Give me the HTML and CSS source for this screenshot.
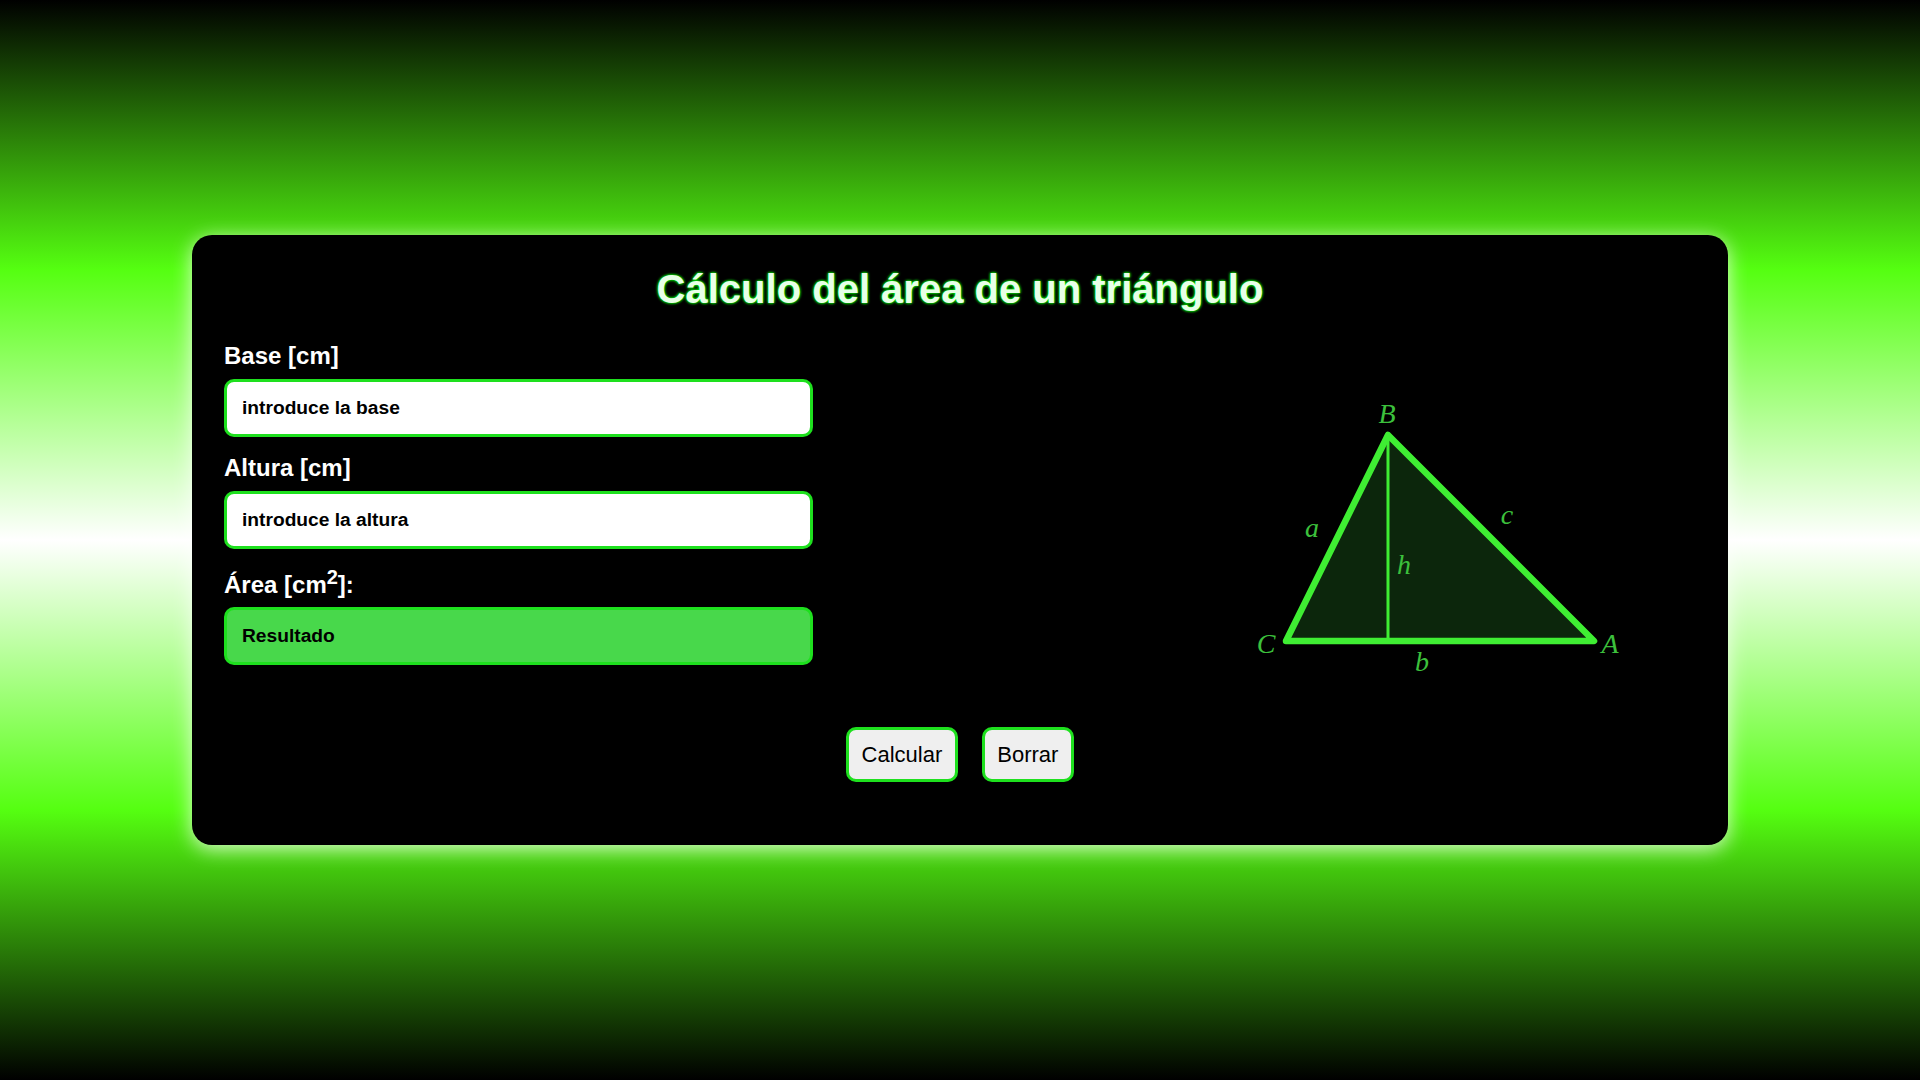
FILE: index.html
```html
<!DOCTYPE html>
<html lang="es">
<head>
    <meta charset="UTF-8">
    <meta name="viewport" content="width=device-width, initial-scale=1.0">
    <title>Área de un triángulo</title>
    <link rel="stylesheet" href="styles.css">
</head>
<body>
    <div class="card">
        <h1>Cálculo del área de un triángulo</h1>

        <div class="content">
            <div class="form">
                <label for="base">Base [cm]</label>
                <input type="text" id="base" placeholder="introduce la base">

                <label for="altura">Altura [cm]</label>
                <input type="text" id="altura" placeholder="introduce la altura">

                <label for="area">Área [cm<sup>2</sup>]:</label>
                <input type="text" id="area" class="result" placeholder="Resultado" readonly>
            </div>

            <svg class="triangle" viewBox="0 0 360 270" width="360" height="270">
                <polygon class="tri-shape" points="25,227 127,21 333,227"/>
                <line class="tri-height" x1="127" y1="21" x2="127" y2="227"/>
                <text x="126" y="9" class="tri-label">B</text>
                <text x="51" y="123" class="tri-label">a</text>
                <text x="246" y="110" class="tri-label">c</text>
                <text x="143" y="160" class="tri-label">h</text>
                <text x="5" y="239" class="tri-label">C</text>
                <text x="349" y="239" class="tri-label">A</text>
                <text x="161" y="257" class="tri-label">b</text>
            </svg>
        </div>

        <div class="buttons">
            <button id="calcBtn">Calcular</button>
            <button id="clearBtn">Borrar</button>
        </div>
    </div>

    <script>
        const base = document.getElementById('base');
        const altura = document.getElementById('altura');
        const area = document.getElementById('area');

        document.getElementById('calcBtn').addEventListener('click', function() {
            area.value = (parseFloat(base.value) * parseFloat(altura.value)) / 2;
        });

        document.getElementById('clearBtn').addEventListener('click', function() {
            base.value = '';
            altura.value = '';
            area.value = '';
        });
    </script>
</body>
</html>
```

FILE: styles.css
```css
* {
    margin: 0;
    padding: 0;
    box-sizing: border-box;
}

body {
    font-family: 'Liberation Sans', Arial, sans-serif;
    background: linear-gradient(to bottom, #000 0%, #55ff11 25%, #fff 50%, #55ff11 75%, #000 100%);
    height: 100vh;
    display: flex;
    align-items: center;
    justify-content: center;
}

.card {
    width: 80%;
    height: 610px;
    padding: 30px 32px;
    background: #000;
    border-radius: 20px;
    box-shadow: 0 4px 20px rgba(255, 255, 255, 0.8);
}

h1 {
    color: #e8ffe8;
    font-size: 40px;
    line-height: 48px;
    text-align: center;
    text-shadow: 0 0 3px #00ff00, 0 0 3px #00ff00;
    margin-bottom: 29px;
}

.content {
    display: flex;
    justify-content: space-between;
    align-items: flex-start;
}

.form {
    width: 589px;
    display: flex;
    flex-direction: column;
}

label {
    color: #fff;
    font-size: 24px;
    font-weight: bold;
    margin-bottom: 9px;
}

input {
    height: 58px;
    padding: 0 15px;
    margin-bottom: 17px;
    border: 3px solid #1ee01e;
    border-radius: 10px;
    background: #fff;
    font-family: inherit;
    font-size: 19.2px;
    font-weight: bold;
    outline: none;
}

input::placeholder {
    color: #000;
    opacity: 1;
}

.result {
    margin-top: -1px;
    background: #48d84b;
}

.triangle {
    margin: 72px 75px 0 0;
    overflow: visible;
}

.tri-shape {
    fill: #0c260c;
    stroke: #3fee33;
    stroke-width: 6.5;
    stroke-linejoin: round;
}

.tri-height {
    stroke: #3fee33;
    stroke-width: 3;
}

.tri-label {
    fill: #3cc03c;
    font-family: 'Liberation Serif', serif;
    font-style: italic;
    font-size: 28px;
    text-anchor: middle;
}

.buttons {
    display: flex;
    justify-content: center;
    gap: 24px;
    margin-top: 43px;
}

button {
    height: 55px;
    padding: 0 12.5px;
    border: 3px solid #1ee01e;
    border-radius: 10px;
    background: #efefef;
    color: #000;
    font-family: inherit;
    font-size: 22px;
    cursor: pointer;
}
```
